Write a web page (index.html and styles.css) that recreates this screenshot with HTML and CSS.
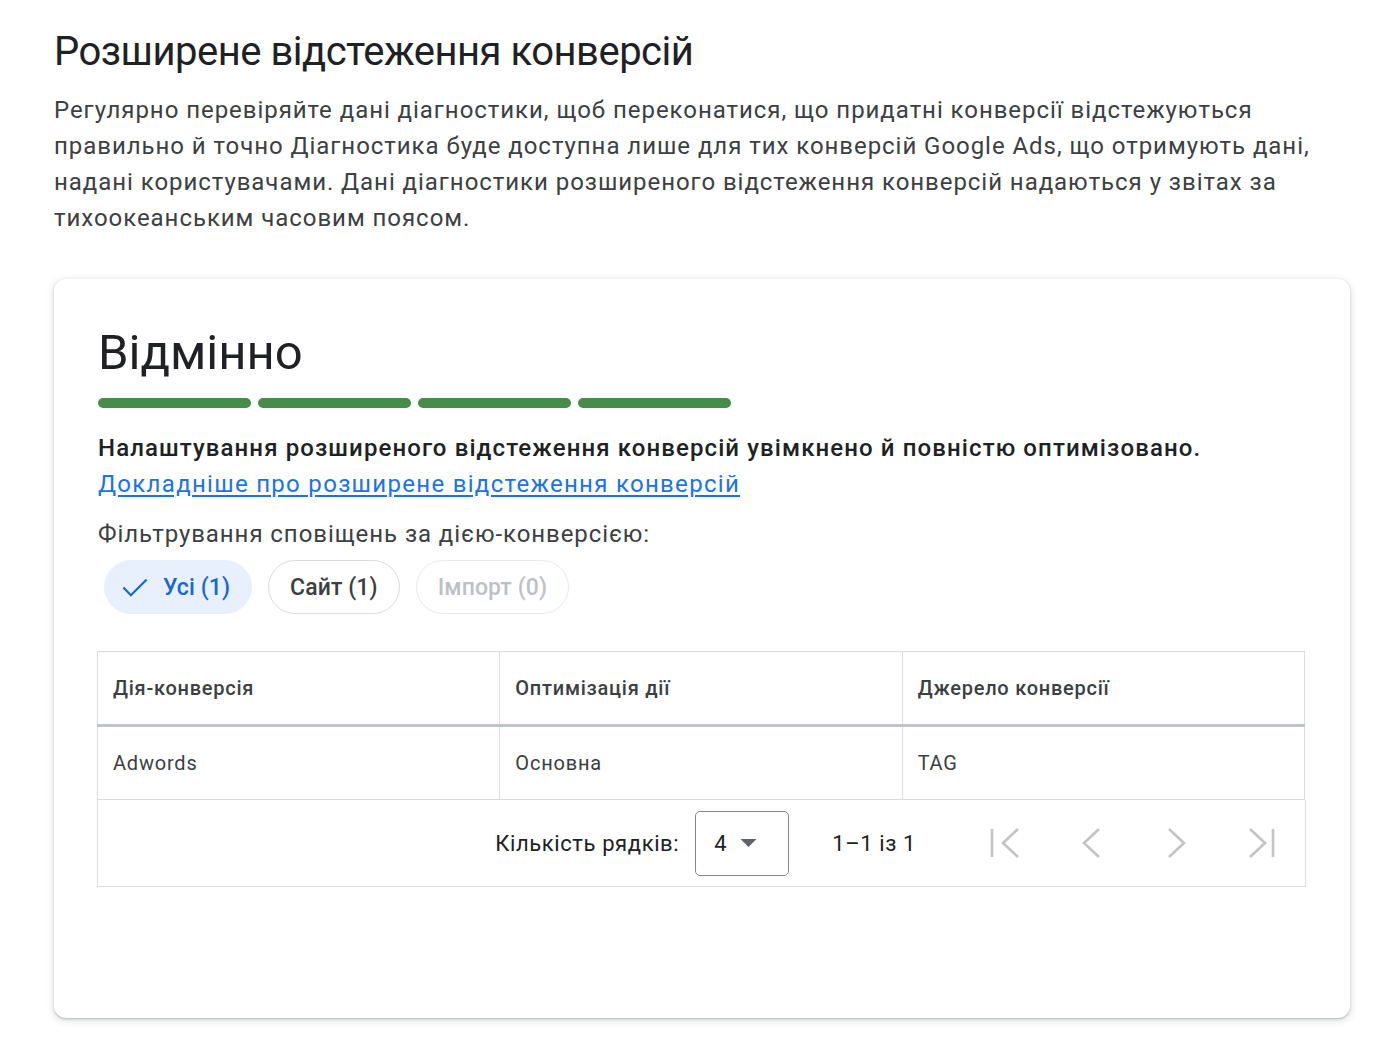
FILE: index.html
```html
<!DOCTYPE html>
<html lang="uk">
<head>
    <meta charset="UTF-8">
    <title>Розширене відстеження конверсій</title>
    <link rel="stylesheet" href="styles.css">
</head>
<body>
<div class="page">
    <h1 class="page-title">Розширене відстеження конверсій</h1>
    <p class="intro">Регулярно перевіряйте дані діагностики, щоб переконатися, що придатні конверсії відстежуються правильно й точно Діагностика буде доступна лише для тих конверсій Google Ads, що отримують дані, надані користувачами. Дані діагностики розширеного відстеження конверсій надаються у звітах за тихоокеанським часовим поясом.</p>

    <div class="card">
        <h2 class="status">Відмінно</h2>
        <div class="meter">
            <span class="seg"></span>
            <span class="seg"></span>
            <span class="seg"></span>
            <span class="seg"></span>
        </div>

        <p class="summary">Налаштування розширеного відстеження конверсій увімкнено й повністю оптимізовано.</p>
        <a class="more" href="#">Докладніше про розширене відстеження конверсій</a>

        <p class="filter-label">Фільтрування сповіщень за дією-конверсією:</p>
        <div class="chips">
            <button class="chip selected">
                <svg class="check" viewBox="0 0 24 24" width="28" height="28"><path d="M2 12.5l6.5 6.5L22 5.5" fill="none" stroke="currentColor" stroke-width="1.9"/></svg>
                Усі (1)
            </button>
            <button class="chip">Сайт (1)</button>
            <button class="chip disabled">Імпорт (0)</button>
        </div>

        <div class="table-wrap">
            <table class="grid">
                <thead>
                <tr>
                    <th>Дія-конверсія</th>
                    <th>Оптимізація дії</th>
                    <th>Джерело конверсії</th>
                </tr>
                </thead>
                <tbody>
                <tr>
                    <td>Adwords</td>
                    <td>Основна</td>
                    <td>TAG</td>
                </tr>
                </tbody>
            </table>
            <div class="pager">
                <span class="rows-label">Кількість рядків:</span>
                <div class="rows-select">
                    <span>4</span>
                    <svg viewBox="0 0 10 5" width="17" height="8"><path d="M0 0h10L5 5z" fill="#5f6368"/></svg>
                </div>
                <span class="range">1–1 із 1</span>
                <div class="nav">
                    <!-- first / previous / next / last page -->
                    <svg viewBox="0 0 30 30" width="30" height="30"><path d="M2 1v28M28 1L13 15l15 14" fill="none" stroke="currentColor" stroke-width="2.6"/></svg>
                    <svg viewBox="0 0 30 30" width="30" height="30"><path d="M23 1L8 15l15 14" fill="none" stroke="currentColor" stroke-width="2.6"/></svg>
                    <svg viewBox="0 0 30 30" width="30" height="30"><path d="M7 1l15 14L7 29" fill="none" stroke="currentColor" stroke-width="2.6"/></svg>
                    <svg viewBox="0 0 30 30" width="30" height="30"><path d="M2 1l15 14L2 29M25 1v28" fill="none" stroke="currentColor" stroke-width="2.6"/></svg>
                </div>
            </div>
        </div>
    </div>
</div>
</body>
</html>
```

FILE: styles.css
```css
/* Diagnostics page for enhanced conversions */
body {
    margin: 0;
    padding: 0;
    background: #fff;
    font-family: Roboto, "Noto Sans", Arial, sans-serif;
    color: #3c4043;
}

.page {
    padding: 28px 34px 21px 54px;
}

.page-title {
    margin: 0;
    font-size: 40px;
    font-weight: 400;
    line-height: 48px;
    letter-spacing: -0.5px;
    color: #202124;
}

.intro {
    margin: 16px 0 0;
    font-size: 24px;
    line-height: 36px;
    letter-spacing: 0.95px;
    color: #3c4043;
}

.card {
    margin-top: 43px;
    height: 739px;
    box-sizing: border-box;
    padding: 42px 44px 0;
    background: #fff;
    border-radius: 12px;
    box-shadow: 0 1px 2px rgba(60, 64, 67, 0.3), 0 2px 6px 2px rgba(60, 64, 67, 0.12);
}

.status {
    margin: 0;
    font-size: 49px;
    font-weight: 400;
    line-height: 64px;
    color: #202124;
}

.meter {
    display: flex;
    gap: 7px;
    margin-top: 13px;
}

.seg {
    width: 153px;
    height: 10px;
    border-radius: 5px;
    background: #468d49;
}

.summary {
    margin: 22px 0 0;
    font-size: 24px;
    line-height: 36px;
    font-weight: 500;
    letter-spacing: 1.1px;
    color: #202124;
}

.more {
    display: inline-block;
    font-size: 24px;
    line-height: 36px;
    letter-spacing: 1.3px;
    color: #1a73e8;
    text-decoration: underline;
    text-underline-offset: 3px;
}

.filter-label {
    margin: 14px 0 0;
    font-size: 24px;
    line-height: 36px;
    letter-spacing: 0.93px;
    color: #3c4043;
}

.chips {
    display: flex;
    gap: 16px;
    margin: 8px 0 0 6px;
}

.chip {
    display: flex;
    align-items: center;
    gap: 14px;
    height: 54px;
    padding: 0 21px;
    border: 1px solid #dadce0;
    border-radius: 27px;
    background: #fff;
    font-family: inherit;
    font-size: 23px;
    font-weight: 500;
    letter-spacing: 0.1px;
    color: #3c4043;
}

.chip.selected {
    border-color: #e8f0fe;
    background: #e8f0fe;
    color: #1967d2;
    padding-left: 16px;
}

.chip.disabled {
    border-color: #e8eaed;
    color: #bdc1c6;
}

.table-wrap {
    margin: 37px 0 0 -1px;
    width: 1209px;
}

.grid {
    width: 1208px;
    border-collapse: collapse;
    table-layout: fixed;
}

.grid th,
.grid td {
    border: 1px solid #dadce0;
    padding: 0 15px;
    text-align: left;
    font-size: 20px;
}

.grid th {
    height: 72px;
    font-weight: 500;
    letter-spacing: 0.75px;
    color: #3c4043;
    border-bottom: 3px solid #c0c3c7;
}

.grid td {
    height: 72px;
    letter-spacing: 0.8px;
    color: #3c4043;
}

.pager {
    display: flex;
    align-items: center;
    justify-content: flex-end;
    height: 86px;
    border: 1px solid #dadce0;
    border-top: none;
    padding-right: 27px;
    font-size: 22px;
    color: #202124;
}

.rows-label {
    letter-spacing: 0.6px;
}

.rows-select {
    display: flex;
    align-items: center;
    gap: 13px;
    width: 94px;
    height: 65px;
    box-sizing: border-box;
    margin-left: 16px;
    padding-left: 18px;
    border: 1px solid #80868b;
    border-radius: 5px;
    font-size: 22px;
}

.range {
    margin-left: 43px;
    letter-spacing: 0.6px;
}

.nav {
    display: flex;
    gap: 56px;
    margin-left: 74px;
    color: #c4c4c4;
}
```
